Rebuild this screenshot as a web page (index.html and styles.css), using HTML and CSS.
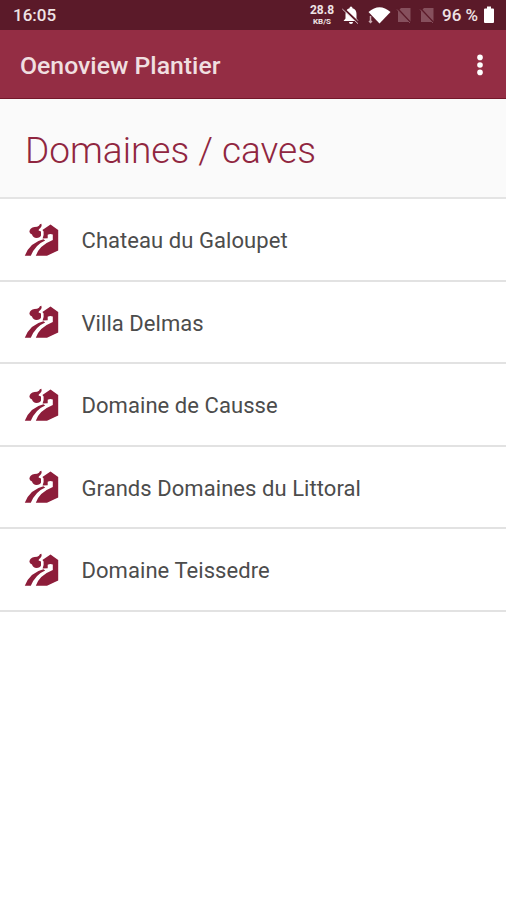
FILE: index.html
```html
<!DOCTYPE html>
<html lang="fr">
<head>
<meta charset="utf-8">
<title>Oenoview Plantier</title>
<link rel="stylesheet" href="styles.css">
</head>
<body>
<svg class="defs" aria-hidden="true">
  <symbol id="estate" viewBox="0 0 36 35">
    <path d="M17.4 .8Q15.6 1 15 2.8Q13.5 4 10.5 4.1Q6 5 5.4 8.6Q5.4 10.8 8 11.5Q9 14.8 12.5 15Q16.2 14.8 17 12.6V8.6L14.6 7.4Q14.4 6.2 16.4 5Q18.4 3.4 17.4 .8Z"/>
    <path d="M.8 32.8Q6 19.4 19.4 16.3L21.2 17.5Q11.5 21.5 6.8 32.8Z"/>
    <path d="M18.4 6.9L26.5 1.6L34.2 7V27.5L23 32.8H11.8Q15 22.4 28.8 16.9V11.6Q26.2 10.4 23.7 11.8V15.2L18.6 15.4L19.6 12V8.4Z"/>
  </symbol>
</svg>
<header>
  <div class="status">
    <span class="clock">16:05</span>
    <div class="rate"><b>28.8</b><small>KB/S</small></div>
    <svg class="bell" viewBox="0 0 20 20"><path d="M10 1.5Q11.5 1.5 11.5 3.3Q15.5 4.5 15.5 9V13.5L17.5 16H2.5L4.5 13.5V9Q4.5 4.5 8.5 3.3Q8.5 1.5 10 1.5ZM8 17H12Q12 19 10 19Q8 19 8 17Z"/><path class="gap" d="M2 3L18 18"/><path class="slash" d="M1.3 4L17 18.7"/></svg>
    <svg class="wifi" viewBox="0 0 24 20"><path d="M1.5 7Q12.5-2.5 23.5 7L12.5 18.5Z"/><path class="edge" d="M3.5 11V17.5M2 16L3.5 17.5L5 16"/></svg>
    <svg class="sim" viewBox="0 0 16 18"><path d="M5 2H14.5V16H2V5Z"/><path class="gap" d="M1 2L15 17"/><path class="line" d="M1 3.5L14 17"/></svg>
    <svg class="sim second" viewBox="0 0 16 18"><path d="M5 2H14.5V16H2V5Z"/><path class="gap" d="M1 2L15 17"/><path class="line" d="M1 3.5L14 17"/></svg>
    <span class="percent">96 %</span>
    <svg class="battery" viewBox="0 0 12 18"><path d="M4 .5H8V2.5H10Q11 2.5 11 3.5V16Q11 17 10 17H2Q1 17 1 16V3.5Q1 2.5 2 2.5H4Z"/></svg>
  </div>
  <div class="appbar">
    <span class="brand">Oenoview Plantier</span>
    <svg class="more" viewBox="0 0 8 24"><circle cx="4" cy="4.4" r="2.8"/><circle cx="4" cy="12" r="2.8"/><circle cx="4" cy="19.4" r="2.8"/></svg>
  </div>
</header>
<main>
  <h1><span>Domaines / caves</span></h1>
  <ul>
    <li><svg><use href="#estate"/></svg><span>Chateau du Galoupet</span></li>
    <li><svg><use href="#estate"/></svg><span>Villa Delmas</span></li>
    <li><svg><use href="#estate"/></svg><span>Domaine de Causse</span></li>
    <li><svg><use href="#estate"/></svg><span>Grands Domaines du Littoral</span></li>
    <li><svg><use href="#estate"/></svg><span>Domaine Teissedre</span></li>
  </ul>
</main>
</body>
</html>
```
FILE: styles.css
```css
* { box-sizing: border-box; }
body { margin: 0; height: 900px; overflow: hidden; background: #fff; font-family: Roboto, "Liberation Sans", sans-serif; }
.defs { display: none; }
.status { display: flex; align-items: center; height: 30px; padding: 0 11px 0 13px; background: #5b1a29; color: #efe3e5; }
.status svg { flex: none; fill: #fff; }
.clock { font-size: 17px; font-weight: 500; line-height: 30px; }
.rate { display: flex; flex-direction: column; align-items: center; width: 26px; margin-left: auto; }
.rate b { font-size: 12px; line-height: 11px; font-weight: 700; }
.rate small { margin-top: 1px; font-size: 8px; line-height: 9px; font-weight: 700; }
.bell { width: 20px; height: 20px; margin-left: 6px; }
.status .gap { fill: none; stroke: #5b1a29; stroke-width: 1.8; }
.status .slash { fill: none; stroke: #d8c3c8; stroke-width: 1; }
.status .line { fill: none; stroke: #86505d; stroke-width: 1; }
.wifi { width: 24px; height: 20px; margin-left: 6px; }
.wifi .edge { fill: none; stroke: #c7a8af; stroke-width: 1.5; }
.status .sim { width: 16px; height: 18px; margin-left: 5px; fill: #86505d; }
.status .second { margin-left: 7px; }
.percent { width: 38px; margin-left: 7px; font-size: 17px; font-weight: 500; line-height: 30px; white-space: nowrap; }
.battery { width: 12px; height: 18px; margin-left: 3px; }
.appbar { display: flex; align-items: center; justify-content: space-between; height: 69px; padding: 2px 22px 0 20px; background: #942d44; border-bottom: 1.5px solid #74172a; color: #f0dfe0; }
.brand { font-size: 24.8px; font-weight: 500; white-space: nowrap; }
.more { width: 8px; height: 24px; fill: #fff; }
h1 { display: flex; align-items: center; height: 100px; margin: 0; padding: 5px 25px 0; border-bottom: 2px solid #e4e4e4; background: #fafafa; color: #902640; font-size: 37px; font-weight: 300; white-space: nowrap; }
ul { margin: 0; padding: 0; list-style: none; }
li { display: flex; align-items: center; height: 82.5px; padding: 3px 24px 0; border-bottom: 2px solid #e2e2e2; color: #4c4c4c; font-size: 22px; letter-spacing: .06px; white-space: nowrap; }
li svg { width: 36px; height: 35px; margin: 0 21.5px 1px 0; fill: #8d1d3a; }
```
